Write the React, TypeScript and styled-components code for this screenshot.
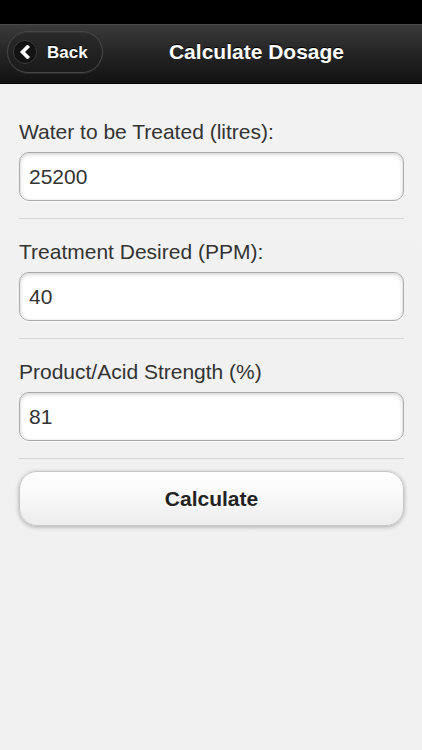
import styled, { createGlobalStyle } from 'styled-components';

const GlobalStyle = createGlobalStyle`
	html, body {
		margin: 0;
		padding: 0;
		background: #f1f1f1;
		font-family: 'Liberation Sans', Arial, Helvetica, sans-serif;
		-webkit-font-smoothing: antialiased;
	}
	* {
		box-sizing: border-box;
	}
`;

const Page = styled.div`
	min-height: 750px;
	display: flex;
	flex-direction: column;
	background: linear-gradient(to bottom, #f7f7f7 0px, #f2f2f2 40px, #f0f0f0 100%);
`;

const StatusBar = styled.div`
	height: 24px;
	background: #000;
`;

const Header = styled.header`
	height: 60px;
	display: flex;
	align-items: center;
	padding: 7px 0 11px 7px;
	background: linear-gradient(to bottom, #3b3b3b 0%, #262626 45%, #121212 100%);
	border-top: 1px solid #4a4a4a;
	border-bottom: 1px solid #000;
`;

const BackButton = styled.button`
	width: 96px;
	height: 42px;
	display: flex;
	align-items: center;
	gap: 10px;
	padding: 0 14px 0 5px;
	border-radius: 21px;
	border: 1px solid #474747;
	background: linear-gradient(to bottom, #2a2a2a 0%, #1a1a1a 100%);
	box-shadow: inset 0 1px 0 rgba(255, 255, 255, 0.06), 0 1px 0 rgba(255, 255, 255, 0.08);
	cursor: pointer;
`;

const BackIcon = styled.span`
	width: 24px;
	height: 24px;
	flex: none;
	display: flex;
	align-items: center;
	justify-content: center;
	border-radius: 50%;
	background: #141414;
	border: 1px solid #3c3c3c;
	box-shadow: inset 0 1px 2px rgba(0, 0, 0, 0.6);
`;

const BackLabel = styled.span`
	font-size: 17px;
	font-weight: 700;
	line-height: 20px;
	padding-top: 2px;
	color: #fff;
	text-shadow: 0 -1px 0 #000;
`;

const Title = styled.h1`
	flex: 1;
	margin: 0;
	padding-right: 12px;
	text-align: center;
	font-size: 21px;
	font-weight: 700;
	line-height: 42px;
	color: #fff;
	text-shadow: 0 -1px 0 #000;
`;

const Content = styled.main`
	padding: 15px 18px 15px 19px;
	display: flex;
	flex-direction: column;
`;

const Field = styled.div`
	padding: 21px 0 17px;
	border-bottom: 1px solid #d6d6d6;
	display: flex;
	flex-direction: column;
	gap: 8px;
`;

const Label = styled.label`
	font-size: 21px;
	line-height: 24px;
	color: #333;
`;

const Input = styled.input`
	width: 100%;
	height: 49px;
	padding: 0 9px;
	border: 1px solid #a9a9a9;
	border-radius: 10px;
	background: #fff;
	box-shadow: inset 0 1px 4px rgba(0, 0, 0, 0.2), 0 1px 0 rgba(255, 255, 255, 0.8);
	font-family: inherit;
	font-size: 21px;
	color: #333;
	outline: none;
`;

const CalcButton = styled.button`
	margin-top: 12px;
	width: 100%;
	height: 55px;
	border: 1px solid #c6c6c6;
	border-radius: 18px;
	background: linear-gradient(to bottom, #ffffff 0%, #f8f8f8 50%, #ececec 100%);
	box-shadow: 0 1px 4px rgba(0, 0, 0, 0.3);
	font-family: inherit;
	font-size: 21px;
	font-weight: 700;
	color: #222;
	text-shadow: 0 1px 0 #fff;
	cursor: pointer;
`;

const fields = [
	{ id: 'water', label: 'Water to be Treated (litres):', value: '25200' },
	{ id: 'ppm', label: 'Treatment Desired (PPM):', value: '40' },
	{ id: 'strength', label: 'Product/Acid Strength (%)', value: '81' },
];

export default function App() {
	return (
		<>
			<GlobalStyle />
			<Page>
				<StatusBar />
				<Header>
					<BackButton>
						<BackIcon>
							<svg width="12" height="14" viewBox="0 0 12 14">
								<path
									d="M8.5 2 L3.5 7 L8.5 12"
									fill="none"
									stroke="#fff"
									strokeWidth="3.6"
									strokeLinecap="square"
									strokeLinejoin="miter"
								/>
							</svg>
						</BackIcon>
						<BackLabel>Back</BackLabel>
					</BackButton>
					<Title>Calculate Dosage</Title>
				</Header>
				<Content>
					{fields.map((f) => (
						<Field key={f.id}>
							<Label htmlFor={f.id}>{f.label}</Label>
							<Input id={f.id} defaultValue={f.value} />
						</Field>
					))}
					<CalcButton>Calculate</CalcButton>
				</Content>
			</Page>
		</>
	);
}
